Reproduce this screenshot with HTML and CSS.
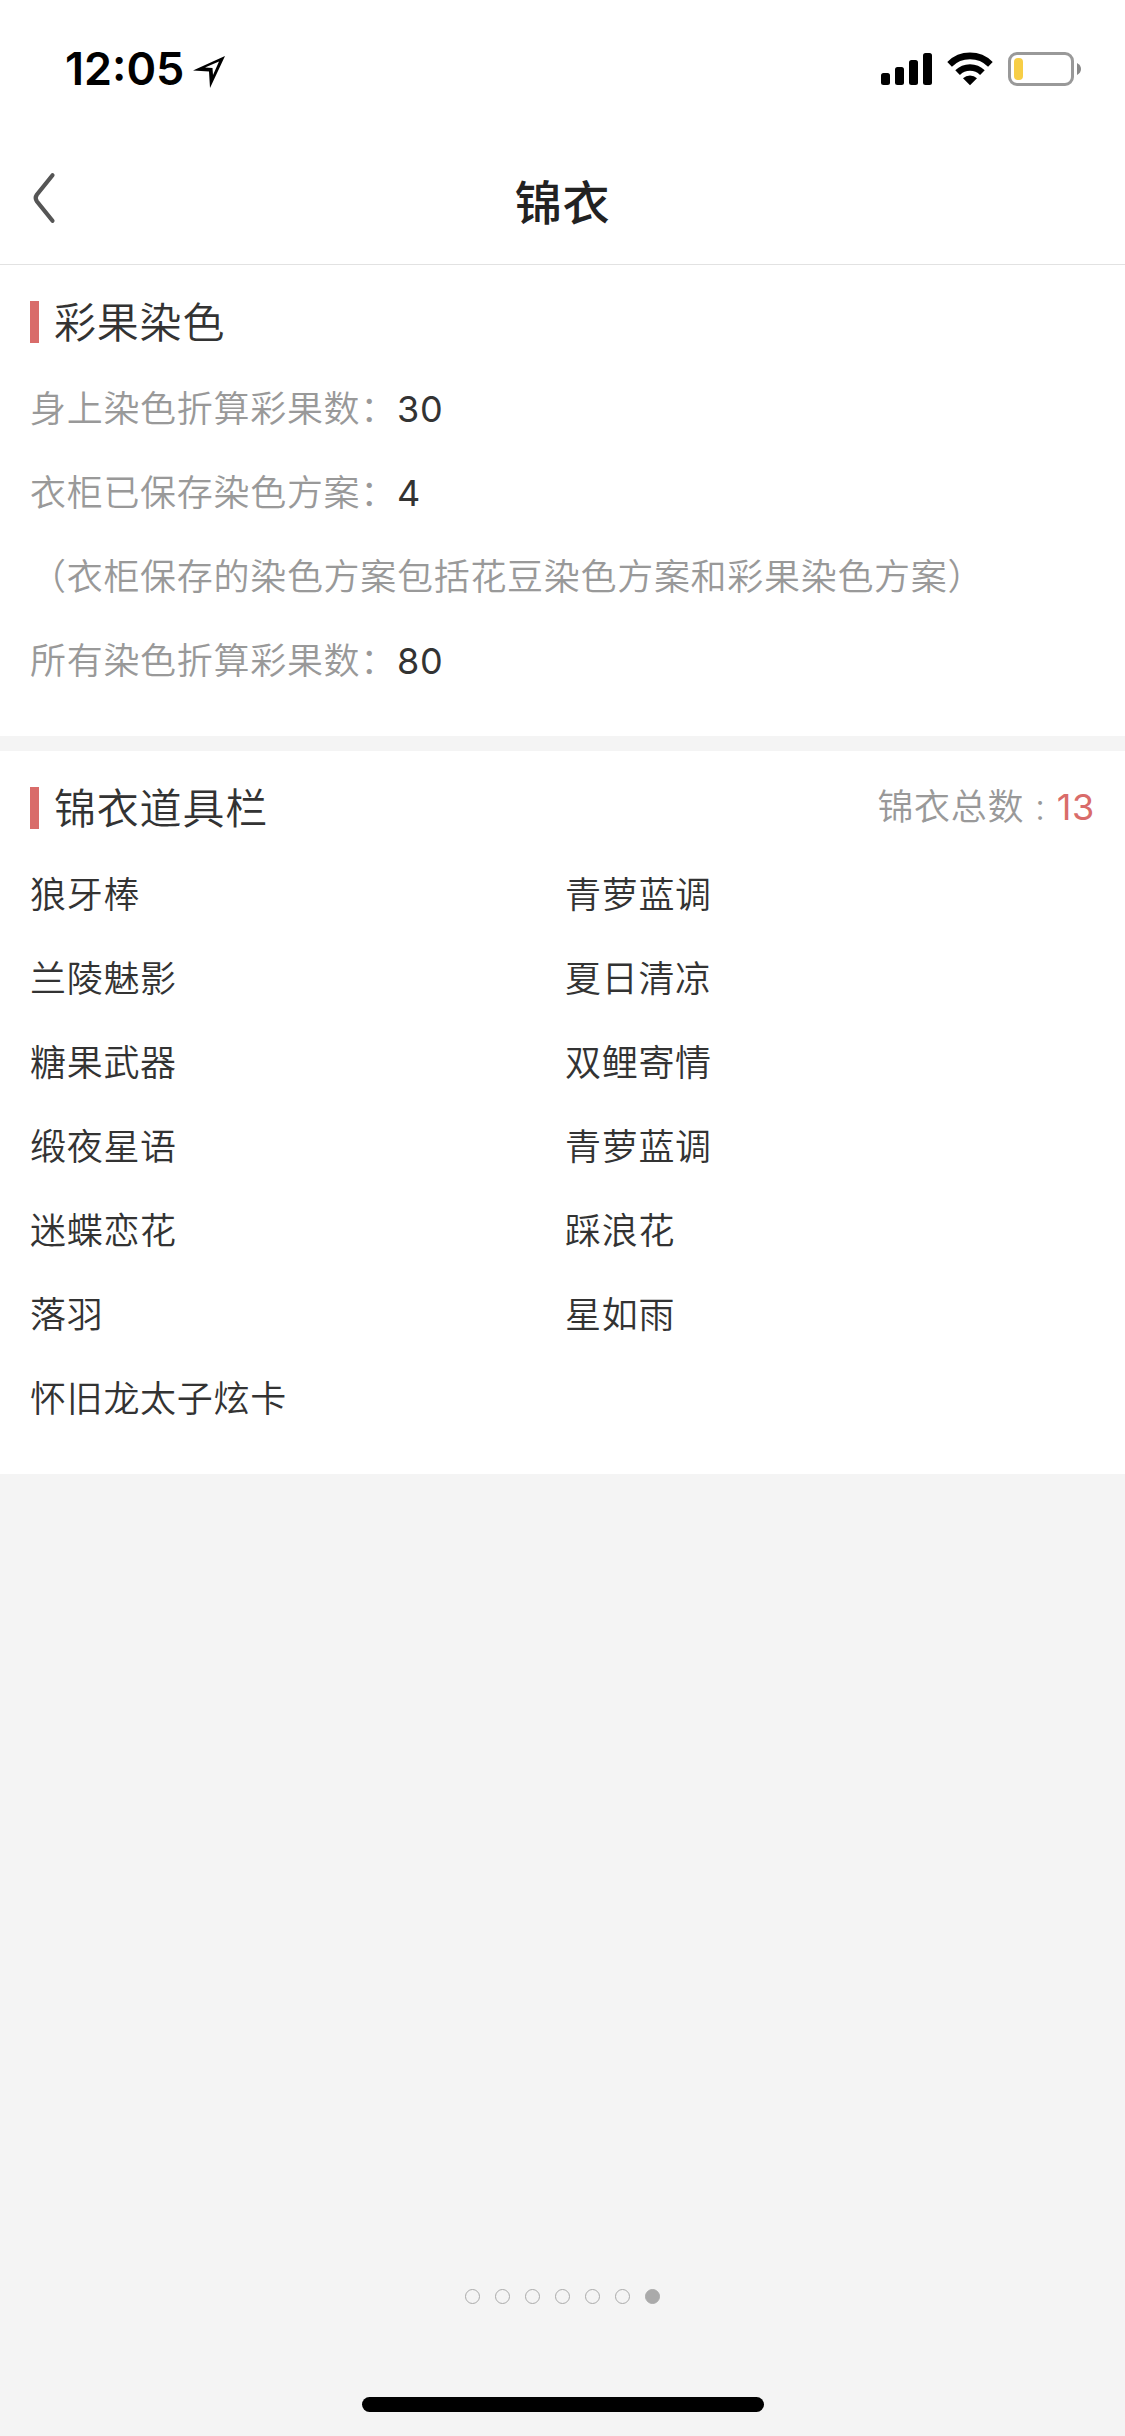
FILE: index.html
```html
<!DOCTYPE html>
<html lang="zh-CN">
<head>
    <meta charset="UTF-8">
    <title>锦衣</title>
    <link rel="stylesheet" href="styles.css">
</head>
<body>
    <div class="status-bar">
        <div class="status-left">
            <span class="time">12:05</span>
            <svg class="location" width="32" height="32" viewBox="0 0 32 32">
                <path fill-rule="evenodd" d="M32 0 L17 32 L16 15.5 L0 14.5 Z M26 5.5 L12 11.4 L19.5 12 L20 19 Z"/>
            </svg>
        </div>
        <div class="status-right">
            <svg width="51" height="34" viewBox="0 0 51 34">
                <rect x="0" y="21" width="9" height="12" rx="2.5"/>
                <rect x="14" y="15" width="9" height="18" rx="2.5"/>
                <rect x="28" y="8" width="9" height="25" rx="2.5"/>
                <rect x="42" y="1" width="9" height="32" rx="2.5"/>
            </svg>
            <svg class="wifi" width="46" height="34" viewBox="0 0 46 34">
                <path d="M2.6 12.3 A29 29 0 0 1 43.4 12.3" fill="none" stroke="#000" stroke-width="6.6"/>
                <path d="M10.6 20.6 A17.6 17.6 0 0 1 35.4 20.6" fill="none" stroke="#000" stroke-width="6.6"/>
                <path d="M16 26.3 A10 10 0 0 1 30 26.3 L23 33.3 Z"/>
            </svg>
            <svg width="74" height="34" viewBox="0 0 74 34">
                <rect x="1.5" y="1.5" width="63" height="31" rx="7.5" fill="none" stroke="#999" stroke-width="3"/>
                <rect x="6" y="6" width="9" height="22" rx="4" fill="#f7ce46"/>
                <path d="M69 11 Q73 13.2 73 17 Q73 20.8 69 23 Z" fill="#888"/>
            </svg>
        </div>
    </div>

    <div class="nav-bar">
        <svg class="back" width="24" height="52" viewBox="0 0 24 52">
            <path d="M20.5 3.2 L4.8 22.8 Q2.6 26 4.8 29.2 L20.5 48.8" fill="none" stroke="#555" stroke-width="4.2" stroke-linecap="round"/>
        </svg>
        <h1>锦衣</h1>
    </div>

    <div class="section">
        <div class="section-head">
            <h2>彩果染色</h2>
        </div>
        <div class="row"><span class="label">身上染色折算彩果数：</span><span class="num">30</span></div>
        <div class="row"><span class="label">衣柜已保存染色方案：</span><span class="num">4</span></div>
        <div class="row"><span class="label">（衣柜保存的染色方案包括花豆染色方案和彩果染色方案）</span></div>
        <div class="row"><span class="label">所有染色折算彩果数：</span><span class="num">80</span></div>
    </div>

    <div class="section">
        <div class="section-head">
            <h2>锦衣道具栏</h2>
            <div class="total">锦衣总数 : <span class="count">13</span></div>
        </div>
        <div class="items">
            <div class="row">狼牙棒</div>
            <div class="row">青萝蓝调</div>
            <div class="row">兰陵魅影</div>
            <div class="row">夏日清凉</div>
            <div class="row">糖果武器</div>
            <div class="row">双鲤寄情</div>
            <div class="row">缎夜星语</div>
            <div class="row">青萝蓝调</div>
            <div class="row">迷蝶恋花</div>
            <div class="row">踩浪花</div>
            <div class="row">落羽</div>
            <div class="row">星如雨</div>
            <div class="row">怀旧龙太子炫卡</div>
        </div>
    </div>

    <div class="footer">
        <div class="dots">
            <span class="dot"></span>
            <span class="dot"></span>
            <span class="dot"></span>
            <span class="dot"></span>
            <span class="dot"></span>
            <span class="dot"></span>
            <span class="dot active"></span>
        </div>
        <div class="home-bar"></div>
    </div>
</body>
</html>
```
FILE: styles.css
```css
* {
    box-sizing: border-box;
}

body {
    margin: 0;
    height: 2436px;
    display: flex;
    flex-direction: column;
    background: #f4f4f4;
    color: #333;
    font-family: Inter, "Noto Sans CJK SC", sans-serif;
    font-size: 36px;
    font-weight: 350;
    letter-spacing: 0.7px;
}

h1, h2 {
    margin: 0;
}

.status-bar {
    height: 132px;
    padding: 0 43px 0 65px;
    background: #fff;
    display: flex;
    justify-content: space-between;
}

.status-left {
    display: flex;
    padding-top: 42px;
}

.time {
    width: 128px;
    line-height: 54px;
    font-size: 45px;
    font-weight: 600;
    letter-spacing: 0;
    color: #000;
}

.location {
    margin-top: 14px;
}

.status-right {
    display: flex;
    padding-top: 52px;
}

.wifi {
    margin: 0 15px;
}

.nav-bar {
    height: 133px;
    padding: 0 30px;
    background: #fff;
    border-bottom: 1px solid #e2e2e2;
    display: grid;
    grid-template-columns: 100px 1fr 100px;
    align-items: center;
}

.back {
    margin-left: 2px;
}

h1 {
    text-align: center;
    font-size: 47px;
    line-height: 70px;
    padding-top: 10px;
    font-weight: 500;
    color: #222;
}

.section {
    padding: 13px 30px 34px;
    background: #fff;
    margin-bottom: 15px;
}

.section-head {
    height: 88px;
    display: flex;
    align-items: center;
    justify-content: space-between;
}

h2 {
    height: 42px;
    line-height: 44px;
    padding-left: 15px;
    border-left: 9px solid #d96c6a;
    font-size: 42px;
    font-weight: 350;
    letter-spacing: 0.8px;
}

.total {
    color: #999;
    line-height: 84px;
    padding-bottom: 2px;
}

.count {
    color: #d96c6a;
    font-weight: 400;
}

.row {
    height: 84px;
    line-height: 86px;
    white-space: nowrap;
}

.label {
    color: #999;
}

.num {
    font-weight: 400;
}

.items {
    display: grid;
    grid-template-columns: 535px 1fr;
}

.footer {
    margin-top: auto;
    display: flex;
    flex-direction: column;
    align-items: center;
    gap: 93px;
    padding-bottom: 24px;
}

.dots {
    display: flex;
    gap: 15px;
}

.dot {
    width: 15px;
    height: 15px;
    border: 1px solid #aaa;
    border-radius: 50%;
}

.dot.active {
    background: #aaa;
}

.home-bar {
    width: 402px;
    height: 15px;
    border-radius: 8px;
    background: #000;
}
```
